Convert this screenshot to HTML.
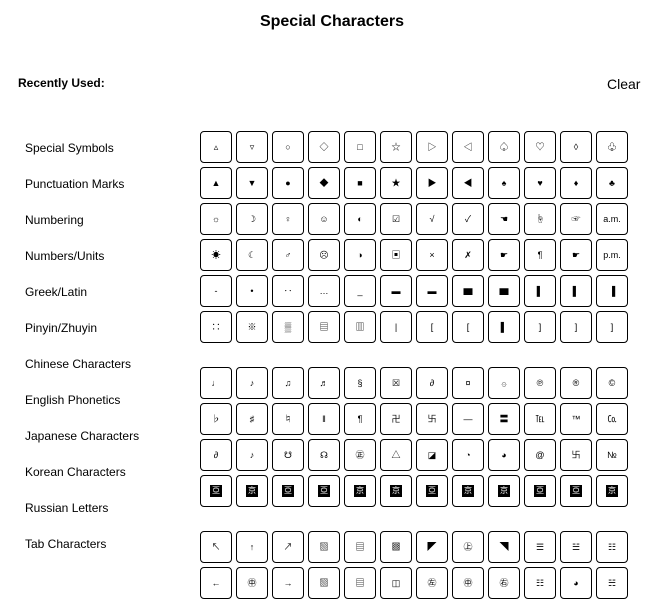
<!DOCTYPE html>
<html><head><meta charset="utf-8"><style>
body{margin:0;width:664px;height:597px;overflow:hidden;background:#fff;font-family:"Liberation Sans","Noto Sans CJK SC",sans-serif;color:#000;position:relative}
.t{position:absolute;left:0;width:664px;top:13px;text-align:center;font-weight:bold;font-size:16px}
.ru{position:absolute;left:18px;top:76px;font-weight:bold;font-size:12px}
.cl{position:absolute;left:607px;top:76px;font-size:14px}
.l{position:absolute;left:25px;font-size:12px}
.b{position:absolute;width:30px;height:30px;border:1px solid #000;border-radius:4px;display:flex;align-items:center;justify-content:center;font-size:9px;line-height:1;overflow:hidden}
.k{width:12px;height:12px;background:#000;color:#fff;font-size:8px;display:flex;align-items:center;justify-content:center}
</style></head><body>
<div class="t">Special Characters</div>
<div class="ru">Recently Used:</div>
<div class="cl">Clear</div>
<div class="l" style="top:141px">Special Symbols</div>
<div class="l" style="top:177px">Punctuation Marks</div>
<div class="l" style="top:213px">Numbering</div>
<div class="l" style="top:249px">Numbers/Units</div>
<div class="l" style="top:285px">Greek/Latin</div>
<div class="l" style="top:321px">Pinyin/Zhuyin</div>
<div class="l" style="top:357px">Chinese Characters</div>
<div class="l" style="top:393px">English Phonetics</div>
<div class="l" style="top:429px">Japanese Characters</div>
<div class="l" style="top:465px">Korean Characters</div>
<div class="l" style="top:501px">Russian Letters</div>
<div class="l" style="top:537px">Tab Characters</div>
<div id="g"></div>
<script>
var rows=[[131,"▵ ▿ ○ ◇ □ ☆ ▷ ◁ ♤ ♡ ◊ ♧"],[167,"▲ ▼ ● ◆ ■ ★ ▶ ◀ ♠ ♥ ♦ ♣"],[203,"☼ ☽ ♀ ☺ ◐ ☑ √ ✓ ☚ ☝ ☞ a.m."],[239,"☀ ☾ ♂ ☹ ◑ ▣ × ✗ ☛ ¶ ☛ p.m."],[275,"- • ‥ … _ ▬ ▬ ▆ ▆ ▌ ▌ ▐"],[311,"∷ ※ ▒ ▤ ▥ | [ [ ▌ ] ] ]"],[367,"♩ ♪ ♫ ♬ § ☒ ∂ ¤ ۞ ℗ ® ©"],[403,"♭ ♯ ♮ ‖ ¶ 卍 卐 — 〓 ℡ ™ ㏇"],[439,"∂ ♪ ☋ ☊ ㊣ △ ◪ ◔ ◕ @ 卐 №"],[475,"K"],[531,"↖ ↑ ↗ ▧ ▤ ▩ ◤ ㊤ ◥ ☰ ☱ ☷"],[567,"← ㊥ → ▧ ▤ ◫ ㊧ ㊥ ㊨ ☷ ◕ ☵"]];
var kk="亞京亞亞京京亞京京亞亞京";
var h="";rows.forEach(function(r){if(r[1]=="K"){for(var i=0;i<12;i++)h+='<div class="b" style="left:'+(200+36*i)+'px;top:'+r[0]+'px"><div class="k">'+kk[i]+'</div></div>';return;}r[1].split(" ").forEach(function(s,i){h+='<div class="b" style="left:'+(200+36*i)+'px;top:'+r[0]+'px">'+s+'</div>';});});
document.getElementById("g").innerHTML=h;
</script>
</body></html>
